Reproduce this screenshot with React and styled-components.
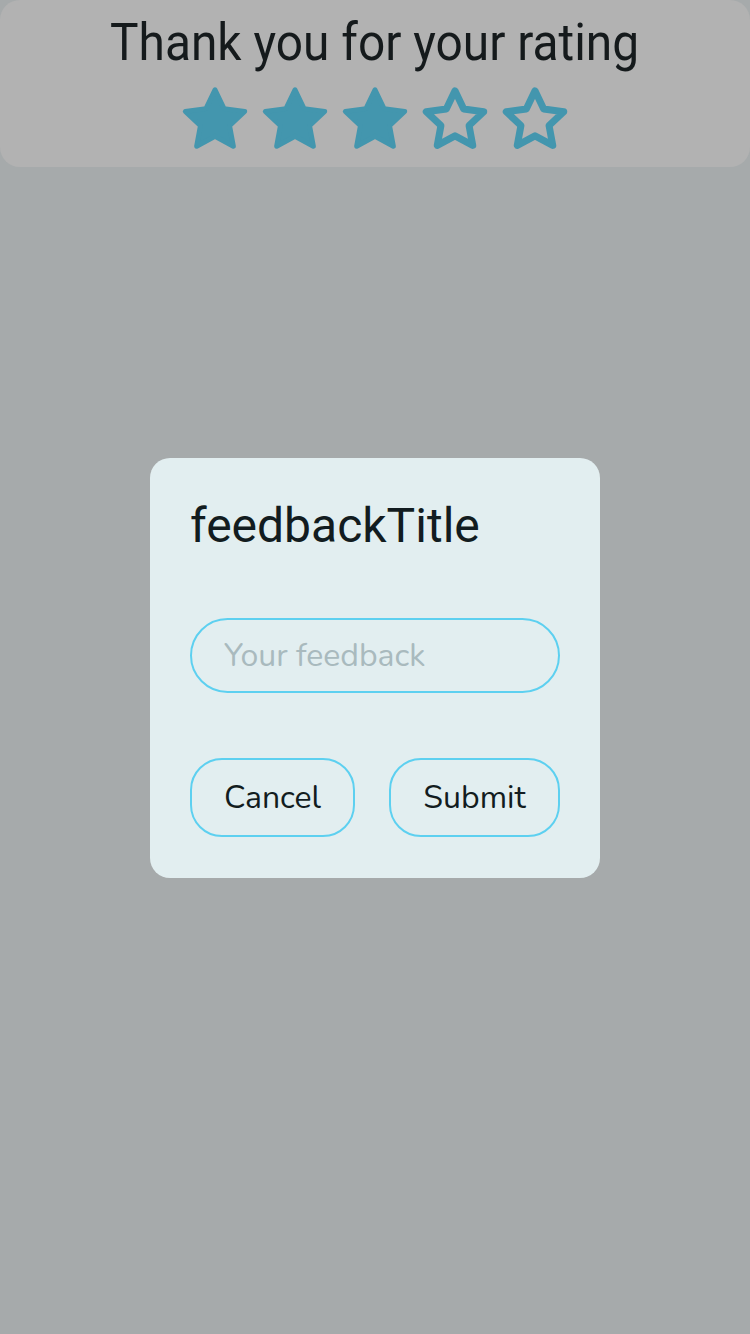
import React from "react";
import styled, { createGlobalStyle } from "styled-components";

const Global = createGlobalStyle`
  html, body { margin: 0; padding: 0; }
  body {
    background: #a6aaab;
    font-family: Roboto, "Liberation Sans", sans-serif;
    width: 750px;
    height: 1334px;
    overflow: hidden;
  }
`;

const Page = styled.div`
  width: 750px;
  height: 1334px;
  display: flex;
  flex-direction: column;
`;

const RatingCard = styled.section`
  background: #b2b2b2;
  border-radius: 20px;
  height: 167px;
  box-sizing: border-box;
  padding-top: 13px;
  display: flex;
  flex-direction: column;
  align-items: center;
`;

const RatingTitle = styled.h1`
  margin: 0;
  font-family: Roboto, "Liberation Sans", sans-serif;
  font-weight: 400;
  font-size: 52px;
  line-height: 60px;
  color: #151a1c;
  white-space: nowrap;
  transform: scaleX(0.92);
`;

const Stars = styled.div`
  display: flex;
  margin-top: 7px;
`;

const StarIcon = styled.svg`
  width: 80px;
  height: 80px;
  display: block;
`;

const Overlay = styled.div`
  position: fixed;
  inset: 0;
  display: flex;
  align-items: center;
  justify-content: center;
`;

const Dialog = styled.div`
  width: 450px;
  margin-top: 2px;
  box-sizing: border-box;
  padding: 40px 40px 41px;
  background: #e2eef0;
  border-radius: 20px;
  display: flex;
  flex-direction: column;
`;

const DialogTitle = styled.h2`
  margin: 0;
  font-family: Roboto, "Liberation Sans", sans-serif;
  font-weight: 400;
  font-size: 48px;
  line-height: 56px;
  color: #121c20;
`;

const Input = styled.input`
  margin-top: 64px;
  height: 75px;
  box-sizing: border-box;
  width: 100%;
  border: 2px solid #5dd0f0;
  border-radius: 38px;
  background: transparent;
  padding: 0 32px;
  font-family: Nunito, Lato, "Open Sans", sans-serif;
  font-size: 32px;
  color: #121c20;
  outline: none;
  &::placeholder { color: #a9babe; }
`;

const Actions = styled.div`
  margin-top: 65px;
  display: flex;
  justify-content: space-between;
`;

const Button = styled.button`
  height: 79px;
  width: ${(p) => p.$w}px;
  box-sizing: border-box;
  border: 2px solid #5dd0f0;
  border-radius: 32px;
  background: transparent;
  font-family: Nunito, Lato, "Open Sans", sans-serif;
  font-size: 32px;
  color: #121c20;
  padding: 0;
  cursor: pointer;
`;

function starPoints(cx, cy, R, ratio) {
  const pts = [];
  for (let i = 0; i < 10; i++) {
    const r = i % 2 === 0 ? R : R * ratio;
    const a = (-90 + i * 36) * (Math.PI / 180);
    pts.push(`${(cx + r * Math.cos(a)).toFixed(2)},${(cy + r * Math.sin(a)).toFixed(2)}`);
  }
  return pts.join(" ");
}

const COLOR = "#4396ae";

function Star({ filled }) {
  return (
    <StarIcon viewBox="0 0 80 80">
      {filled ? (
        <polygon
          points={starPoints(40, 41, 31.2, 0.49)}
          fill={COLOR}
          stroke={COLOR}
          strokeWidth="5"
          strokeLinejoin="round"
        />
      ) : (
        <polygon
          points={starPoints(40, 41, 30.2, 0.49)}
          fill="none"
          stroke={COLOR}
          strokeWidth="7"
          strokeLinejoin="round"
        />
      )}
    </StarIcon>
  );
}

export default function App() {
  const rating = 3;
  return (
    <Page>
      <Global />
      <RatingCard>
        <RatingTitle>Thank you for your rating</RatingTitle>
        <Stars>
          {[1, 2, 3, 4, 5].map((n) => (
            <Star key={n} filled={n <= rating} />
          ))}
        </Stars>
      </RatingCard>
      <Overlay>
        <Dialog>
          <DialogTitle>feedbackTitle</DialogTitle>
          <Input placeholder="Your feedback" />
          <Actions>
            <Button $w={165}>Cancel</Button>
            <Button $w={171}>Submit</Button>
          </Actions>
        </Dialog>
      </Overlay>
    </Page>
  );
}
